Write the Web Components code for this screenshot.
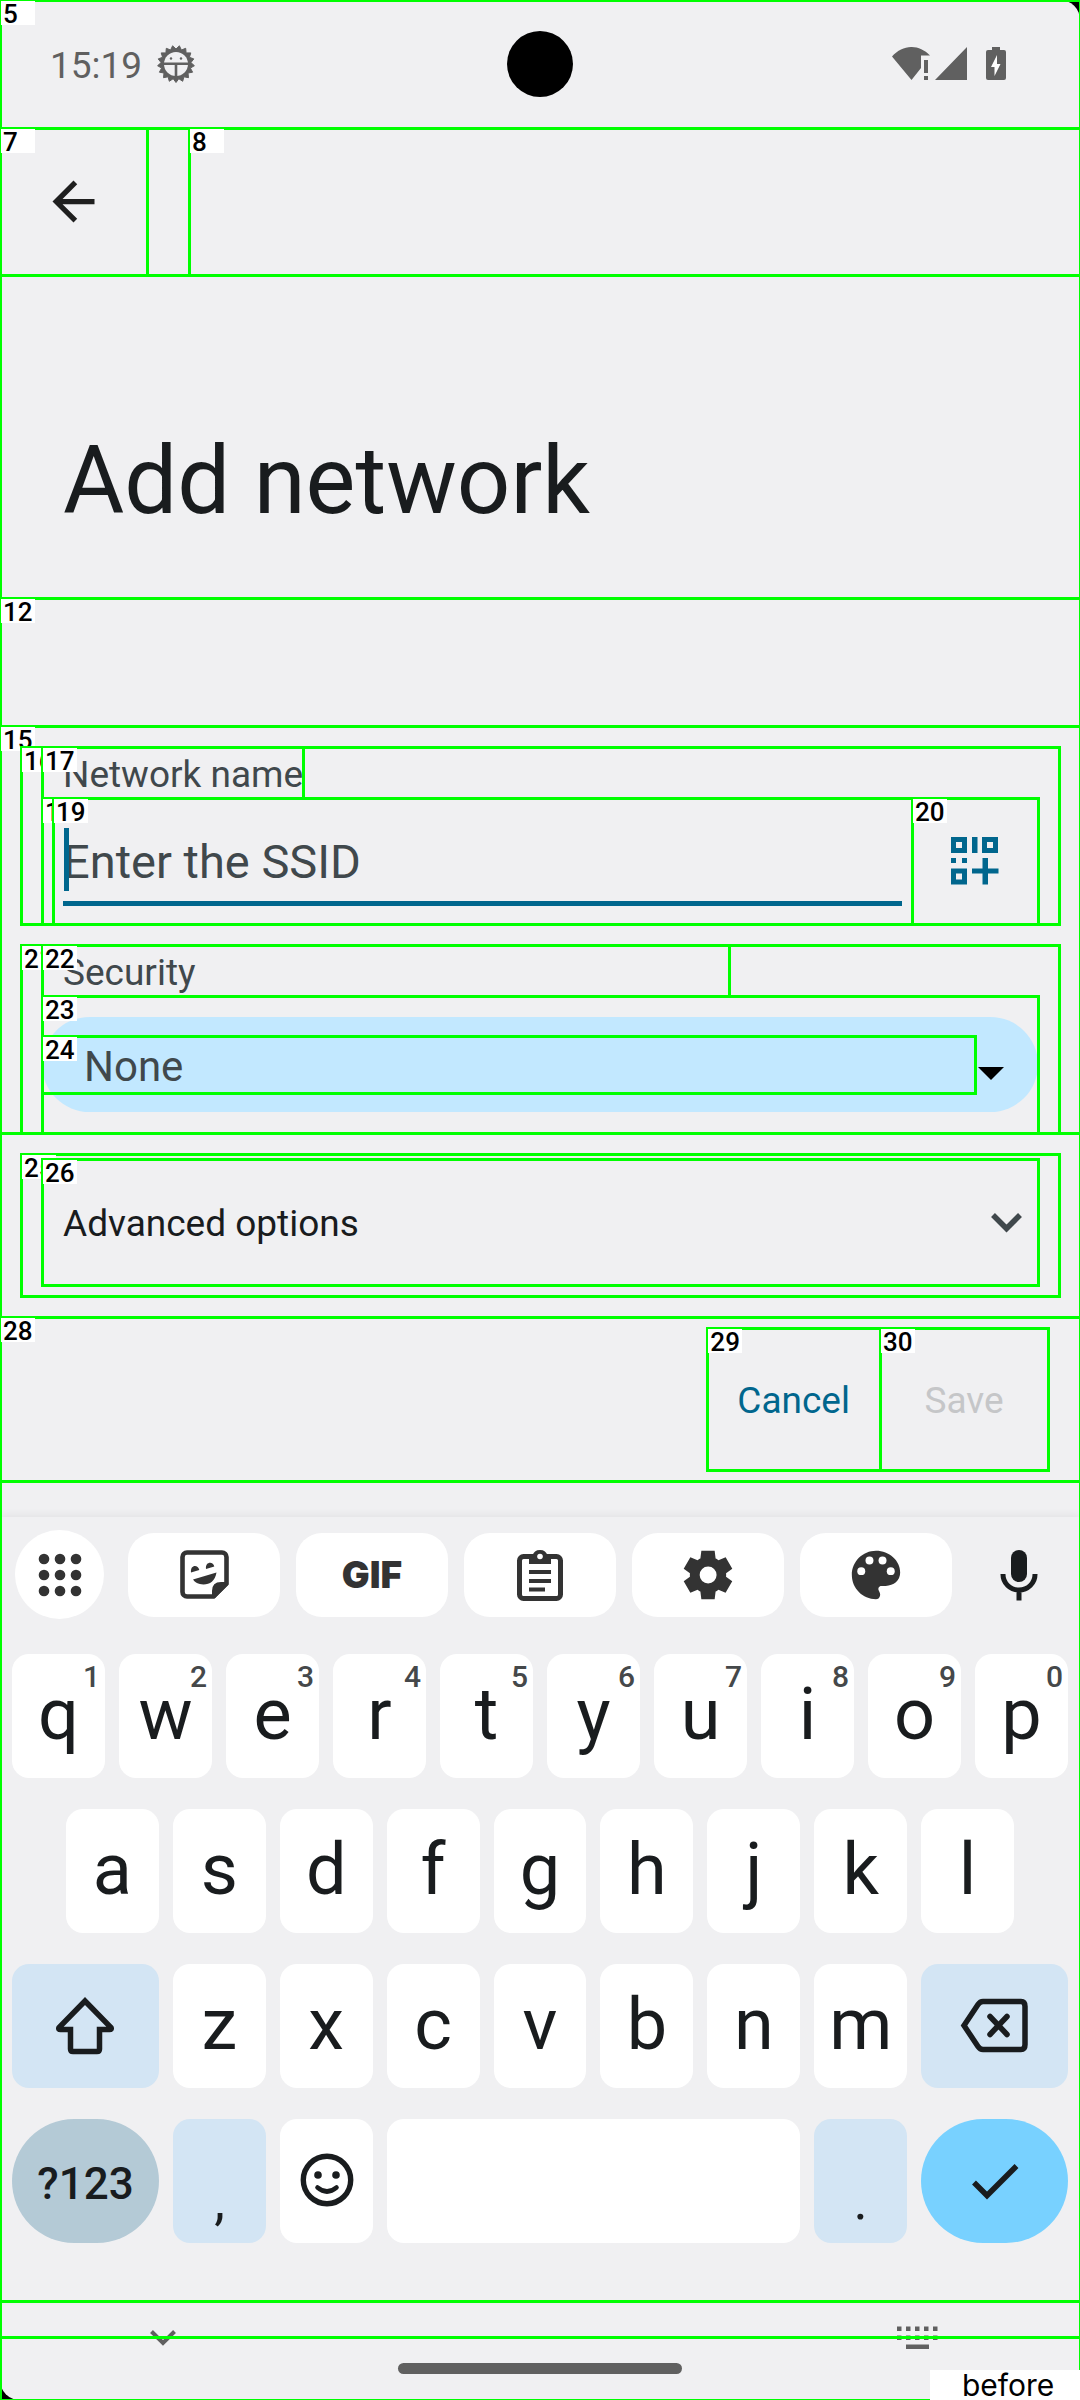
<!DOCTYPE html>
<html lang="en">
<head>
<meta charset="utf-8">
<meta name="viewport" content="width=device-width">
<title>Add network</title>
<style>
  html, body { margin: 0; background: #000; }
  body { font-family: Roboto, "Liberation Sans", sans-serif; color: #191c1e; }
</style>
</head>
<body>
<device-screen></device-screen>
<script>
const define = (name, markup, setup) => customElements.define(name, class extends HTMLElement {
  constructor() {
    super();
    const t = document.createElement('template');
    t.innerHTML = '<style>*{box-sizing:border-box}button,input,select{font:inherit;color:inherit;background:none;border:0;margin:0;padding:0;border-radius:0;outline:0}</style>' + markup;
    this.attachShadow({ mode: 'open' }).append(t.content.cloneNode(true));
  }
  connectedCallback() { if (setup) setup(this, this.shadowRoot); }
});

/* Toothed rim of the debug badge */
const teeth = Array.from({ length: 34 }, (_, i) => {
  const a = Math.PI * (i / 17 + 0.5), r = i % 2 ? 15 : 18.5;
  return (19 + r * Math.cos(a)).toFixed(1) + ',' + (19 + r * Math.sin(a)).toFixed(1);
}).join(' ');

/* name: [width, height, viewBox, content] */
const ICONS = {
  badge: [38, 38, '0 0 38 38', `<polygon points="${teeth}" fill="currentColor" stroke="currentColor" stroke-width="1"/><circle cx="19" cy="19" r="12" fill="#f0f0f2"/><path d="M6 17.5H32V20H20.3V33H17.7V20H6Z" fill="currentColor"/><circle cx="14" cy="13.5" r="1.2" fill="currentColor"/><circle cx="24" cy="13.5" r="1.2" fill="currentColor"/>`],
  status: [114, 34, '0 0 114 34', '<path d="M0 9.5C11-3 27-3 38 8.5H29V21L19.5 33ZM32 13h4v13h-4zM32 29h4v4h-4zM43 33L75 0V33ZM94 5q0-2 2-2H100V0H108V3H112q2 0 2 2V31q0 2-2 2H96q-2 0-2-2Z" fill="currentColor"/><path d="M105 8L99 20H102.500V29L108.500 17H105Z" fill="#fff"/>'],
  back: [63, 63, '0 0 24 24', '<path d="M20 11H7.830l5.590-5.590L12 4l-8 8 8 8 1.410-1.410L7.830 13H20z" fill="currentColor"/>'],
  qr: [48, 48, '0 0 48 48', '<path d="M2.500 2.500h11v11h-11zM33.500 2.500h11v11h-11zM2.500 34h11v11h-11z" fill="none" stroke="currentColor" stroke-width="5"/><path d="M21 0h5.500v16h-5.500zM0 21h5v5h-5zM11 21h5v5h-5zM21 31.500h10.500V21h5.500v10.500h10.500v5h-10.500v11h-5.500v-11H21z" fill="currentColor"/>'],
  triangle: [26, 13, '0 0 26 13', '<path d="M0 0H26L13 13Z" fill="#000"/>'],
  expand: [63, 63, '0 0 63 63', '<path d="M18 24L31.500 37.500 45 24" fill="none" stroke="currentColor" stroke-width="5.500"/>'],
  apps: [44, 44, '0 0 44 44', [6, 22, 38].map(y => [6, 22, 38].map(x => `<circle cx="${x}" cy="${y}" r="5.300" fill="currentColor"/>`).join('')).join('')],
  sticker: [49, 49, '0 0 49 49', '<path d="M7 2.500H42a4.500 4.500 0 0 1 4.500 4.500V33.500L33.500 46.500H7A4.500 4.500 0 0 1 2.500 42V7A4.500 4.500 0 0 1 7 2.500z" fill="none" stroke="currentColor" stroke-width="4.600"/><path d="M32 48V41Q32 32 41 32H48V35L35 48ZM11 22.500C10 14.500 18 14 19.300 20ZM26 19C25 11 33.500 11 34.300 16.500ZM13 29.500L36.500 22.500C35 31 30 34.500 23.500 34.500 18 34 15 32.500 13 29.500z" fill="currentColor"/>'],
  clipboard: [46, 54, '0 0 46 54', '<rect x="2.500" y="8.500" width="41" height="42" rx="4" fill="none" stroke="currentColor" stroke-width="5"/><path d="M12 8H15.500A7.700 7.700 0 0 1 30.500 8H34V16H12ZM12 22H34V26H12ZM12 31H34V35H12ZM12 39.500H28V43.500H12Z" fill="currentColor"/><circle cx="23" cy="8.500" r="2.800" fill="#fff"/>'],
  settings: [58, 58, '0 0 24 24', '<path fill="currentColor" d="M9.250 22l-.4-3.200q-.325-.125-.612-.3-.288-.175-.563-.375L4.700 19.375l-2.750-4.750 2.575-1.950Q4.500 12.500 4.500 12.337v-.675q0-.162.025-.337L1.950 9.375l2.750-4.750 2.975 1.250q.275-.2.575-.375.3-.175.6-.3l.4-3.200h5.500l.4 3.200q.325.125.613.3.287.175.562.375l2.975-1.250 2.750 4.750-2.575 1.950q.025.175.025.337v.675q0 .163-.05.338l2.575 1.950-2.750 4.750-2.950-1.250q-.275.2-.575.375-.3.175-.6.3l-.4 3.200Zm2.800-6.500q1.450 0 2.475-1.025Q15.550 13.450 15.550 12q0-1.450-1.025-2.475Q13.500 8.500 12.050 8.500q-1.475 0-2.488 1.025Q8.550 10.550 8.550 12q0 1.450 1.012 2.475Q10.575 15.500 12.050 15.500Z"/>'],
  palette: [58, 58, '0 0 24 24', '<path fill="currentColor" d="M12 22C6.490 22 2 17.510 2 12S6.490 2 12 2s10 4.040 10 9c0 3.310-2.690 5.500-6 5.500h-1.800c-1 0-1.500 1-1 2l.4.900c.4 1-.2 2.600-1.600 2.600z"/><g fill="#fff"><circle cx="9.300" cy="6" r="1.650"/><circle cx="14.700" cy="6" r="1.650"/><circle cx="5.900" cy="10.400" r="1.650"/><circle cx="18.100" cy="10.400" r="1.650"/></g>'],
  mic: [40, 52, '0 0 40 52', '<rect x="12" y="1" width="16" height="32" rx="8" fill="currentColor"/><path d="M4 25V25.500A16 15.500 0 0 0 36 25.500V25M20 41V51.500" fill="none" stroke="currentColor" stroke-width="5"/>'],
  shift: [62, 60, '0 0 62 60', '<path d="M31 5L57 31.500Q58 33.500 55.500 33.500H45.500V53Q45.500 55.500 43 55.500H19Q16.500 55.500 16.500 53V33.500H6.500Q4 33.500 5 31.500Z" fill="none" stroke="currentColor" stroke-width="5.500"/>'],
  backspace: [71, 58, '0 0 71 58', '<path d="M5 28.500L19 7.500Q21 4.500 24 4.500H62Q66 4.500 66 9.500V47.500Q66 52.500 62 52.500H24Q21 52.500 19 49.500Z" fill="none" stroke="currentColor" stroke-width="5.500"/><path d="M31 19.500L48 37.500M48 19.500L31 37.500" stroke="currentColor" stroke-width="5.500" stroke-linecap="round"/>'],
  smile: [54, 54, '0 0 54 54', '<circle cx="27" cy="27" r="23.700" fill="none" stroke="currentColor" stroke-width="5.400"/><circle cx="18" cy="22" r="3.800" fill="currentColor"/><circle cx="36" cy="22" r="3.800" fill="currentColor"/><path d="M17.500 34.500Q27 42.500 36.500 34.500" fill="none" stroke="currentColor" stroke-width="4.600" stroke-linecap="round"/>'],
  check: [50, 42, '0 0 50 42', '<path d="M4 22.500L17 35.500 46.500 6" fill="none" stroke="currentColor" stroke-width="5.500"/>'],
  hide: [26, 18, '0 0 26 18', '<path d="M1.500 2.500L13 14 24.500 2.500" fill="none" stroke="currentColor" stroke-width="4"/>'],
  keyboard: [41, 24, '0 0 41 24', [0, 9].map(y => [0, 9, 18, 27, 36].map(x => `<rect x="${x}" y="${y + .5}" width="4.500" height="4.500" fill="currentColor"/>`).join('')).join('') + '<rect x="9" y="18.500" width="23" height="4.500" fill="currentColor"/>'],
};

define('ui-icon', '<style>:host{display:block;flex:none}svg{display:block}</style><div></div>', (el, root) => {
  const [w, h, box, body] = ICONS[el.getAttribute('name')];
  root.querySelector('div').innerHTML = `<svg width="${w}" height="${h}" viewBox="${box}" aria-hidden="true">${body}</svg>`;
});

/* A numbered, outlined area of the screen */
define('ui-region', `<style>
  :host { display: block; position: relative; box-sizing: border-box; }
  i { position: absolute; inset: -1px -2px -2px -1px; border: 3px solid #0f0; pointer-events: none; }
  b { position: absolute; left: 1px; top: 1px; width: 34px; height: 24px; padding-left: 2px; background: #fff; color: #000; font: 500 26px/26px Roboto, sans-serif; pointer-events: none; }
  b[hidden] { display: none; }
</style><i></i><b></b><slot></slot>`, (el, root) => {
  const b = root.querySelector('b');
  b.textContent = el.getAttribute('tag') || '';
  b.hidden = !b.textContent;
});

define('status-bar', `<style>
  :host { display: grid; grid-template-columns: 1fr auto 1fr; align-items: center; height: 128px; padding: 0 50px; box-sizing: border-box; color: #606060; }
  .left { display: flex; align-items: center; gap: 15px; }
  time { font-size: 37px; line-height: 44px; padding-top: 4px; }
  .lens { width: 66px; height: 66px; border-radius: 50%; background: #000; }
  .right { justify-self: end; margin-right: 24px; }
</style>
<div class="left"><time>15:19</time><ui-icon name="badge"></ui-icon></div>
<div class="lens"></div>
<ui-icon class="right" name="status"></ui-icon>`);

define('app-bar', `<style>
  :host { display: block; color: #1f1f1f; }
  .bar { display: flex; gap: 42px; height: 147px; }
  .nav { width: 147px; }
  .fill { flex: 1; }
  button { display: grid; place-items: center; width: 100%; height: 100%; }
</style>
<ui-region class="bar">
  <ui-region class="nav" tag="7"><button aria-label="Navigate up"><ui-icon name="back"></ui-icon></button></ui-region>
  <ui-region class="fill" tag="8"></ui-region>
</ui-region>`);

define('network-name-field', `<style>
  :host { display: block; color: #40484c; }
  .field { padding: 0 21px; }
  .label { width: fit-content; }
  label { display: block; font-size: 37px; line-height: 47px; padding: 4px 0 0 21px; }
  .row { display: flex; height: 126px; padding-left: 11px; }
  .entry { flex: 1; padding: 0 10px; }
  input { display: block; width: 100%; height: 108px; padding-top: 24px; border-bottom: 5px solid #00668d; font-size: 47px; }
  input::placeholder { color: #40484c; opacity: 1; }
  .caret { position: absolute; left: 11px; top: 30px; width: 5px; height: 63px; background: #00668d; }
  .scan { width: 126px; color: #00668d; }
  button { display: grid; place-items: center; width: 100%; height: 100%; }
</style>
<ui-region class="field" tag="16">
  <ui-region class="label" tag="17"><label for="ssid">Network name</label></ui-region>
  <ui-region class="row" tag="18">
    <ui-region class="entry" tag="19"><input id="ssid" type="text" placeholder="Enter the SSID"><span class="caret"></span></ui-region>
    <ui-region class="scan" tag="20"><button aria-label="Scan QR code"><ui-icon name="qr"></ui-icon></button></ui-region>
  </ui-region>
</ui-region>`);

define('security-field', `<style>
  :host { display: block; color: #40484c; }
  .field { padding: 0 21px; }
  .label { width: 69%; }
  label { display: block; font-size: 37px; line-height: 47px; padding: 4px 0 0 21px; }
  .box { padding: 21px 0; }
  .pill { display: flex; gap: 3px; padding: 19px 34px 19px 0; border-radius: 48px; background: #c2e8ff; }
  .value { flex: 1; }
  select { display: block; appearance: none; width: 100%; height: 57px; padding: 4px 0 0 42px; font-size: 42px; }
  .pill > ui-icon { align-self: center; padding-top: 18px; }
</style>
<ui-region class="field" tag="21">
  <ui-region class="label" tag="22"><label for="security">Security</label></ui-region>
  <ui-region class="box" tag="23"><div class="pill">
    <ui-region class="value" tag="24"><select id="security"><option>None</option></select></ui-region>
    <ui-icon name="triangle"></ui-icon>
  </div></ui-region>
</ui-region>`);

define('advanced-options', `<style>
  :host { display: block; padding: 21px; }
  .outer { padding: 5px 21px 11px; }
  button { display: flex; align-items: center; justify-content: space-between; width: 100%; height: 126px; padding-left: 21px; font-size: 37px; }
  span { padding-top: 2px; }
  ui-icon { color: #40484c; }
</style>
<ui-region class="outer" tag="25"><ui-region tag="26">
  <button aria-expanded="false"><span>Advanced options</span><ui-icon name="expand"></ui-icon></button>
</ui-region></ui-region>`);

define('action-bar', `<style>
  .bar { display: flex; justify-content: flex-end; padding: 11px 32px; }
  button { display: block; min-width: 168px; height: 142px; padding: 2px 30px 0; font-size: 37px; color: #00668d; }
  button:disabled { color: #c5c6c8; }
</style>
<ui-region class="bar" tag="28">
  <ui-region tag="29"><button>Cancel</button></ui-region>
  <ui-region tag="30"><button disabled>Save</button></ui-region>
</ui-region>`);

define('key-cap', `<style>
  :host { display: block; flex: 93 1 0; min-width: 0; }
  :host([wide]) { flex-grow: 147; }
  :host([space]) { flex-grow: 413; }
  button { position: relative; display: grid; place-items: center; width: 100%; height: 124px; border-radius: 17px; background: #fff; font-size: 72px; line-height: 80px; padding-bottom: 3px; color: #191c1e; }
  small { position: absolute; top: 5px; right: 5px; font-size: 30px; font-weight: 500; line-height: 35px; color: #45484a; }
  :host([tone]) button { background: #d3e5f4; padding: 0; }
  :host([tone=mode]) button { background: #b4cad6; border-radius: 62px; font-size: 44px; font-weight: 500; padding-top: 5px; }
  :host([tone=enter]) button { background: #78d1ff; border-radius: 62px; }
  :host([low]) button { align-items: end; padding-bottom: 12px; font-size: 54px; line-height: 60px; }
</style><button><slot></slot><small></small></button>`, (el, root) => {
  const s = root.querySelector('small');
  s.textContent = el.getAttribute('hint') || '';
  s.hidden = !s.textContent;
  if (s.hidden) s.remove();
});

define('tool-bar', `<style>
  :host { display: flex; align-items: center; gap: 16px; padding: 13px 10px 35px 15px; color: #333; }
  button { display: grid; place-items: center; flex: 1; height: 84px; border-radius: 26px; background: #fff; font: 900 37px Inter, sans-serif; }
  .apps { flex: none; width: 89px; height: 89px; border-radius: 50%; margin-right: 8px; }
  .mic { flex: none; width: 102px; background: none; color: #191c1e; }
</style>
<button class="apps" aria-label="Features"><ui-icon name="apps"></ui-icon></button>
<button aria-label="Stickers"><ui-icon name="sticker"></ui-icon></button>
<button>GIF</button>
<button aria-label="Clipboard"><ui-icon name="clipboard"></ui-icon></button>
<button aria-label="Settings"><ui-icon name="settings"></ui-icon></button>
<button aria-label="Theme"><ui-icon name="palette"></ui-icon></button>
<button class="mic" aria-label="Voice input"><ui-icon name="mic"></ui-icon></button>`);

const keys = (s, hints) => [...s].map((c, i) => `<key-cap${hints ? ` hint="${hints[i]}"` : ''}>${c}</key-cap>`).join('');
define('soft-keyboard', `<style>
  :host { display: block; padding-top: 36px; }
  .panel { padding-bottom: 58px; box-shadow: 0 -2px 8px #0000000f; background: #f0f0f2; }
  .rows { display: flex; flex-direction: column; gap: 31px; padding: 0 12px; }
  .row { display: flex; gap: 14px; }
  .inset { padding: 0 54px; }
</style>
<div class="panel"><tool-bar></tool-bar>
<div class="rows">
  <div class="row">${keys('qwertyuiop', '1234567890')}</div>
  <div class="row inset">${keys('asdfghjkl')}</div>
  <div class="row"><key-cap wide tone="soft"><ui-icon name="shift"></ui-icon></key-cap>${keys('zxcvbnm')}<key-cap wide tone="soft"><ui-icon name="backspace"></ui-icon></key-cap></div>
  <div class="row"><key-cap wide tone="mode">?123</key-cap><key-cap tone="soft" low>,</key-cap><key-cap><ui-icon name="smile"></ui-icon></key-cap><key-cap space></key-cap><key-cap tone="soft" low>.</key-cap><key-cap wide tone="enter"><ui-icon name="check"></ui-icon></key-cap></div>
</div></div>`);

define('nav-bar', `<style>
  :host { display: block; color: #606060; }
  .bar { display: grid; height: 99px; }
  .ime { grid-area: 1 / 1; display: flex; justify-content: space-between; align-items: center; height: 74px; padding: 0 142px 0 150px; }
  .gesture { grid-area: 1 / 1; align-self: end; height: 63px; padding-top: 26px; }
  .handle { width: 284px; height: 11px; border-radius: 6px; background: #606060; margin: 0 auto; }
  .caption { position: absolute; right: 0; bottom: 0; width: 150px; height: 30px; background: #fff; color: #000; padding-left: 32px; font: 30px/30px Inter, sans-serif; }
</style>
<ui-region class="bar">
  <div class="ime"><ui-icon name="hide"></ui-icon><ui-icon name="keyboard"></ui-icon></div>
  <ui-region class="gesture"><div class="handle"></div><div class="caption">before</div></ui-region>
</ui-region>`);

define('device-screen', `<style>
  :host { display: block; overflow: clip; }
  .screen { background: #f0f0f2; border-radius: 20px; }
  h1 { margin: 0; padding: 151px 63px 61px; font-size: 94px; line-height: 111px; font-weight: 400; }
  .spacer { height: 128px; }
  .form { padding: 21px 21px 0; display: flex; flex-direction: column; gap: 21px; }
</style>
<ui-region class="screen" tag="5">
  <status-bar></status-bar>
  <app-bar></app-bar>
  <h1>Add network</h1>
  <ui-region class="spacer" tag="12"></ui-region>
  <ui-region class="form" tag="15">
    <network-name-field></network-name-field>
    <security-field></security-field>
  </ui-region>
  <advanced-options></advanced-options>
  <action-bar></action-bar>
  <soft-keyboard></soft-keyboard>
  <nav-bar></nav-bar>
</ui-region>`);
</script>
</body>
</html>
